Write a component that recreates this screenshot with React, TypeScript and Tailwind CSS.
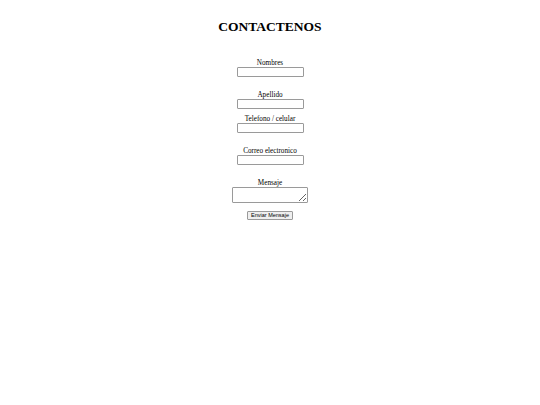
import React from "react";

const fields = [
  { label: "Nombres", gap: "mt-[25px]" },
  { label: "Apellido", gap: "mt-[14px]" },
  { label: "Telefono / celular", gap: "mt-[6px]" },
  { label: "Correo electronico", gap: "mt-[14px]" },
];

export default function App() {
  return (
    <div className="w-[540px] h-[405px] bg-white text-black font-['Liberation_Serif',serif]">
      <h1 className="pt-[19px] text-center text-[13.5px] leading-[15px] font-bold">CONTACTENOS</h1>

      <form className="flex flex-col items-center">
        {fields.map((f) => (
          <div key={f.label} className={`${f.gap} flex flex-col items-center`}>
            <label className="text-[7.2px] leading-[8px]">{f.label}</label>
            <input
              type="text"
              className="w-[67px] h-[10px] border border-[#9a9a9a] rounded-[1px] bg-white"
            />
          </div>
        ))}

        <div className="mt-[14px] flex flex-col items-center">
          <label className="text-[7.2px] leading-[8px]">Mensaje</label>
          <textarea className="w-[76px] h-[16px] border border-[#9a9a9a] rounded-[1px] bg-white" />
        </div>

        <button
          type="button"
          className="mt-[8px] h-[9px] px-[3px] text-[5.5px] leading-[7px] font-['Liberation_Sans',sans-serif] bg-[#efefef] border border-[#9a9a9a] rounded-[1px]"
        >
          Enviar Mensaje
        </button>
      </form>
    </div>
  );
}
